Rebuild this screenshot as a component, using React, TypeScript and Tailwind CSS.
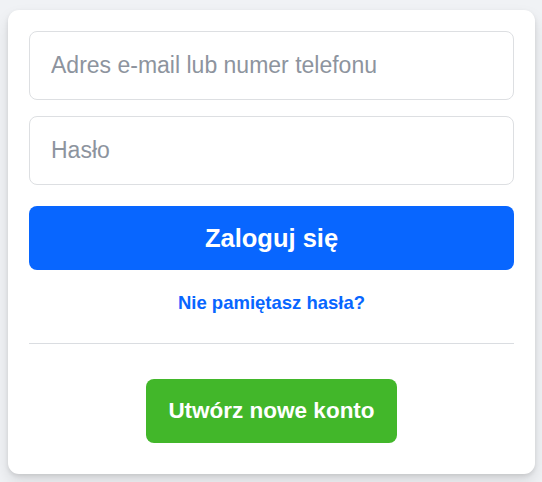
export default function App() {
  return (
    <div className="min-h-screen bg-[#f0f2f5] px-[8px] pt-[10px] font-['Liberation_Sans',Arial,sans-serif]">
      <div className="w-[527px] rounded-[11px] bg-white px-[21px] pt-[21px] pb-[31px] shadow-[0_2px_4px_rgba(0,0,0,0.1),0_8px_16px_rgba(0,0,0,0.1)]">
        <form className="flex flex-col" onSubmit={(e) => e.preventDefault()}>
          <input
            type="text"
            placeholder="Adres e-mail lub numer telefonu"
            className="h-[69px] w-full rounded-[8px] border border-[#dddfe2] px-[21px] text-[23px] text-[#1c1e21] placeholder:text-[#8d949e] outline-none"
          />
          <input
            type="password"
            placeholder="Hasło"
            className="mt-[16px] h-[69px] w-full rounded-[8px] border border-[#dddfe2] px-[21px] text-[23px] text-[#1c1e21] placeholder:text-[#8d949e] outline-none"
          />
          <button
            type="submit"
            className="mt-[21px] h-[64px] w-full rounded-[8px] bg-[#0866ff] text-[25.5px] font-bold text-white"
          >
            Zaloguj się
          </button>
          <a href="#" className="mt-[20px] text-center text-[18.5px] leading-[25px] font-bold text-[#0866ff]">
            Nie pamiętasz hasła?
          </a>
        </form>
        <div className="mt-[28px] border-b border-[#dadde1]" />
        <div className="mt-[35px] flex justify-center">
          <button className="h-[64px] w-[251px] rounded-[8px] bg-[#42b72a] text-[22.5px] font-bold text-white">
            Utwórz nowe konto
          </button>
        </div>
      </div>
    </div>
  );
}
